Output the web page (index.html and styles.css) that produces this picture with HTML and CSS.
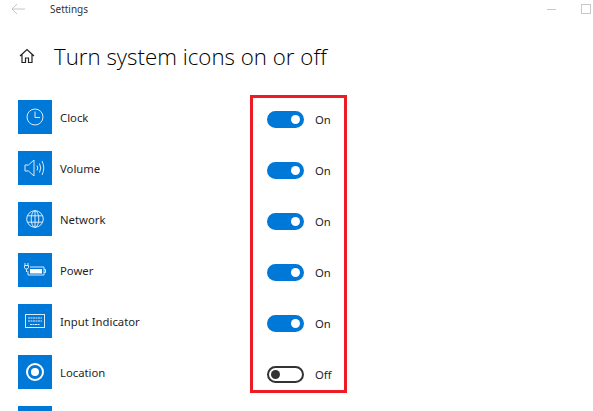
FILE: index.html
```html
<!DOCTYPE html>
<html lang="en">
  <head>
    <meta charset="UTF-8" />
    <title>Settings</title>
    <link rel="stylesheet" href="styles.css">
  </head>
  <body>
    <div class="titlebar">
      <svg class="back" width="16" height="12" viewBox="0 0 16 12">
        <path d="M6 1 1 6l5 5M1 6h13" fill="none" stroke="#c4c4c4" stroke-width="1"/>
      </svg>
      <span class="app-name">Settings</span>
      <span class="win-min"></span>
      <span class="win-max"></span>
    </div>

    <div class="heading">
      <svg class="home" width="16" height="16" viewBox="0 0 16 16">
        <path d="M1 8 8 1.500 15 8M3 6.500V14.500h3.500V10h3v4.500H13V6.500" fill="none" stroke="#222" stroke-width="1.200"/>
      </svg>
      <h1>Turn system icons on or off</h1>
    </div>

    <div class="rows">
      <div class="row">
        <div class="tile">
          <svg width="20" height="20" viewBox="0 0 20 20">
            <circle cx="10" cy="10" r="8" class="ln"/>
            <path d="M10 4.500V10.500H15" class="ln"/>
          </svg>
        </div>
        <span class="name">Clock</span>
        <span class="toggle on"></span>
        <span class="state">On</span>
      </div>
      <div class="row">
        <div class="tile">
          <svg width="22" height="20" viewBox="0 0 22 20">
            <path d="M1 7H4.500L10 2V18L4.500 13H1Z" class="ln"/>
            <path d="M13 7.500Q14.500 10 13 12.500M15.500 5.500Q18 10 15.500 14.500M18 3Q21.500 10 18 17" class="ln"/>
          </svg>
        </div>
        <span class="name">Volume</span>
        <span class="toggle on"></span>
        <span class="state">On</span>
      </div>
      <div class="row">
        <div class="tile">
          <svg width="20" height="20" viewBox="0 0 20 20">
            <circle cx="10" cy="10" r="8.300" class="ln"/>
            <ellipse cx="10" cy="10" rx="3.800" ry="8.300" class="ln"/>
            <path d="M2.500 6.800H17.500M2.500 13.200H17.500M10 1.700V18.300" class="ln"/>
          </svg>
        </div>
        <span class="name">Network</span>
        <span class="toggle on"></span>
        <span class="state">On</span>
      </div>
      <div class="row">
        <div class="tile">
          <svg width="22" height="16" viewBox="0 0 22 16">
            <path d="M6 5H20V13H4V9" class="ln"/>
            <path d="M20 7.500H21.500V10.500H20" class="ln"/>
            <rect x="6" y="7" width="12" height="4.500" fill="#fff"/>
            <path d="M1 1V3.500M4 1V3.500M.5 3.500H4.500V5.500Q4.500 7 2.500 7Q.5 7 .5 5.500ZM2.500 7V10" class="ln"/>
          </svg>
        </div>
        <span class="name">Power</span>
        <span class="toggle on"></span>
        <span class="state">On</span>
      </div>
      <div class="row">
        <div class="tile">
          <svg width="20" height="14" viewBox="0 0 20 14">
            <rect x=".5" y=".5" width="19" height="13" class="ln"/>
            <path d="M3 4H17M3 7H17M5 10.500H15" class="ln keys"/>
          </svg>
        </div>
        <span class="name">Input Indicator</span>
        <span class="toggle on"></span>
        <span class="state">On</span>
      </div>
      <div class="row">
        <div class="tile">
          <svg width="20" height="20" viewBox="0 0 20 20">
            <circle cx="10" cy="10" r="8" fill="none" stroke="#fff" stroke-width="2"/>
            <circle cx="10" cy="10" r="4" fill="#fff"/>
          </svg>
        </div>
        <span class="name">Location</span>
        <span class="toggle"></span>
        <span class="state">Off</span>
      </div>
      <div class="row">
        <div class="tile"></div>
      </div>
    </div>

    <!-- red box drawn over the screenshot -->
    <div class="highlight"></div>
  </body>
</html>
```

FILE: styles.css
```css
html,
body {
  height: 100%;
}
body {
  margin: 0;
  position: relative;
  overflow: hidden;
  background-color: #fff;
  color: #1f1f1f;
  font-family: "Noto Sans", "Open Sans", Arial, sans-serif;
}

.titlebar {
  display: flex;
  align-items: center;
  height: 18px;
  padding-left: 11px;
}
.back {
  margin-right: 23px;
}
.app-name {
  font-size: 10px;
  color: #333;
}
.win-min {
  width: 9px;
  height: 1px;
  margin-left: auto;
  background-color: #c8c8c8;
}
.win-max {
  width: 8px;
  height: 8px;
  margin: 0 2px 0 25px;
  border: 1px solid #c8c8c8;
}

.heading {
  display: flex;
  align-items: center;
  height: 40px;
  margin-top: 18px;
  padding-left: 19px;
}
.home {
  margin-right: 19px;
}
h1 {
  margin: 0;
  font-family: "Open Sans", "Noto Sans", Arial, sans-serif;
  font-size: 22.300px;
  font-weight: 300;
  color: #000;
  white-space: nowrap;
}

.rows {
  margin-top: 24px;
}
.row {
  display: flex;
  align-items: center;
  height: 34px;
  margin-bottom: 17px;
  padding-left: 18px;
}
.tile {
  display: flex;
  flex: none;
  align-items: center;
  justify-content: center;
  width: 34px;
  height: 34px;
  background-color: #0078d7;
}
.ln {
  fill: none;
  stroke: #d8ebfa;
  stroke-width: 1;
}
.keys {
  stroke-dasharray: 2 .5;
}
.name {
  width: 207px;
  margin-left: 8px;
  font-size: 11.300px;
}
.toggle {
  display: flex;
  align-items: center;
  box-sizing: border-box;
  width: 37px;
  height: 17px;
  margin-top: 4px;
  padding: 0 2px;
  border: 2px solid #333;
  border-radius: 9px;
}
.toggle::after {
  content: "";
  width: 9px;
  height: 9px;
  border-radius: 50%;
  background-color: #333;
}
.toggle.on {
  justify-content: flex-end;
  border-color: #0078d7;
  background-color: #0078d7;
}
.toggle.on::after {
  background-color: #fff;
}
.state {
  margin-top: 4px;
  margin-left: 11px;
  font-size: 11.300px;
}

.highlight {
  position: absolute;
  left: 250px;
  top: 95px;
  width: 91px;
  height: 292px;
  border: 3px solid #ed1c24;
}
```
